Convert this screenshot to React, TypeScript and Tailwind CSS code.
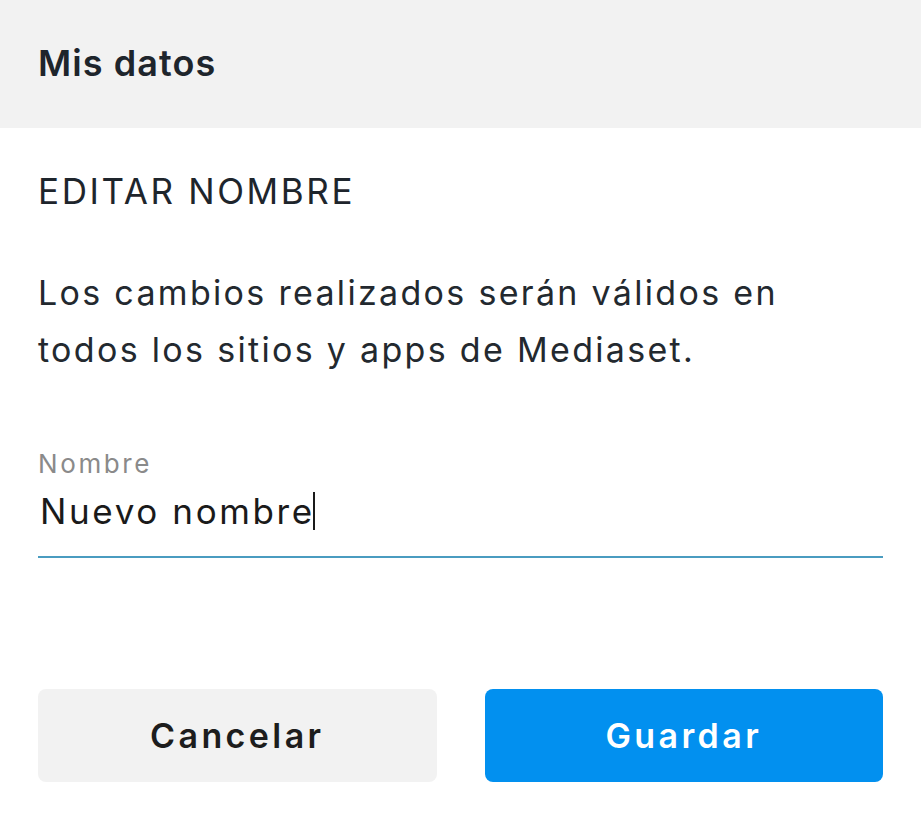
export default function App() {
  const font = { fontFamily: "Inter, 'Noto Sans', sans-serif" };
  return (
    <div className="w-[921px] h-[819px] bg-white text-[#1e252c]" style={font}>
      <div className="h-[128px] bg-[#f2f2f2] flex items-center px-[38px]">
        <h1 className="text-[36px] font-semibold tracking-[0.03em] leading-none -mt-[3px]">Mis datos</h1>
      </div>
      <div className="px-[38px]">
        <h2 className="mt-[35px] text-[35px] font-normal tracking-[0.075em] leading-[56px]">EDITAR NOMBRE</h2>
        <p className="mt-[45px] text-[34px] leading-[57px] tracking-[0.068em] text-[#23292f]">
          Los cambios realizados serán válidos en
          <br />
          todos los sitios y apps de Mediaset.
        </p>
        <div className="mt-[72px]">
          <div className="text-[26px] leading-[28px] text-[#8a8a8a] tracking-[0.1em]">Nombre</div>
          <div className="mt-[9px] flex items-center h-[48px] pl-[2px] text-[35px] tracking-[0.075em] text-[#1a1a1a]">
            <span>Nuevo nombre</span>
            <span className="w-[2px] h-[38px] bg-[#1a1a1a] -ml-[2px]" />
          </div>
          <div className="mt-[21px] h-[2px] bg-[#4a9cc0]" />
        </div>
        <div className="mt-[131px] flex gap-[48px]">
          <button className="flex-1 h-[93px] rounded-[8px] bg-[#f2f2f2] text-[34px] font-semibold tracking-[0.1em] text-[#1d1d1d]">
            Cancelar
          </button>
          <button className="flex-1 h-[93px] rounded-[8px] bg-[#0290ef] text-[34px] font-semibold tracking-[0.1em] text-white">
            Guardar
          </button>
        </div>
      </div>
    </div>
  );
}
